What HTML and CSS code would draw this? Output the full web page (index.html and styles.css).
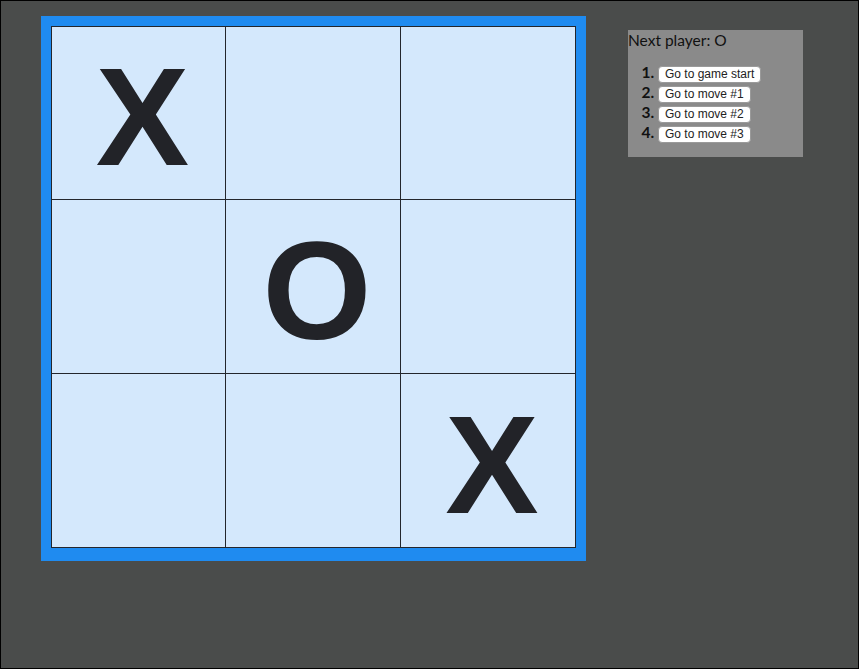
FILE: index.html
```html
<!DOCTYPE html>
<html>
<head>
<meta charset="utf-8">
<link rel="stylesheet" href="styles.css">
</head>
<body>
<div class="page">
  <div class="game">
    <div class="board">
      <div class="grid">
        <div class="cell">X</div>
        <div class="cell"></div>
        <div class="cell"></div>
        <div class="cell"></div>
        <div class="cell">O</div>
        <div class="cell"></div>
        <div class="cell"></div>
        <div class="cell"></div>
        <div class="cell">X</div>
      </div>
    </div>
    <div class="info">
      <div class="status">Next player: O</div>
      <ol class="moves">
        <li><button class="move">Go to game start</button></li>
        <li><button class="move">Go to move #1</button></li>
        <li><button class="move">Go to move #2</button></li>
        <li><button class="move">Go to move #3</button></li>
      </ol>
    </div>
  </div>
</div>
</body>
</html>
```
FILE: styles.css
```css
html, body {
  margin: 0;
  padding: 0;
  background: #4a4c4b;
}
.page {
  box-sizing: border-box;
  width: 859px;
  height: 669px;
  border: 1px solid #000;
  padding: 15px 40px;
  background: #4a4c4b;
}
.game {
  display: flex;
  align-items: flex-start;
  gap: 42px;
}
.board {
  background: #1f8bf0;
  padding: 10px 10px 13px 10px;
}
.grid {
  display: grid;
  grid-template-columns: 173px 174px 174px;
  grid-template-rows: 172px 173px 173px;
  gap: 1px;
  padding: 1px;
  background: #23262c;
}
.cell {
  background: #d4e8fc;
  display: flex;
  align-items: center;
  justify-content: center;
  font-family: "Liberation Sans", Arial, sans-serif;
  font-weight: bold;
  font-size: 140px;
  line-height: 1;
  color: #222328;
  padding: 8px 0 0 8px;
  box-sizing: border-box;
}
.info {
  margin-top: 14px;
  width: 175px;
  background: #8a8a8a;
  font-family: "Lato", "Noto Sans", sans-serif;
  color: #111;
}
.status {
  font-size: 15.5px;
  line-height: 20px;
  font-weight: normal;
}
.moves {
  margin: 12px 0 15px 0;
  padding-left: 30px;
  font-size: 15.5px;
  font-weight: normal;
}
.moves li {
  height: 20px;
  line-height: 20px;
}
.moves li::marker {
  font-weight: bold;
}
.move {
  font-family: "Liberation Sans", Arial, sans-serif;
  font-size: 12px;
  font-weight: normal;
  color: #222;
  background: #fff;
  border: 1px solid #9a9a9a;
  border-radius: 4px;
  padding: 0 6px;
  height: 17px;
  line-height: 15px;
  vertical-align: middle;
}
```
